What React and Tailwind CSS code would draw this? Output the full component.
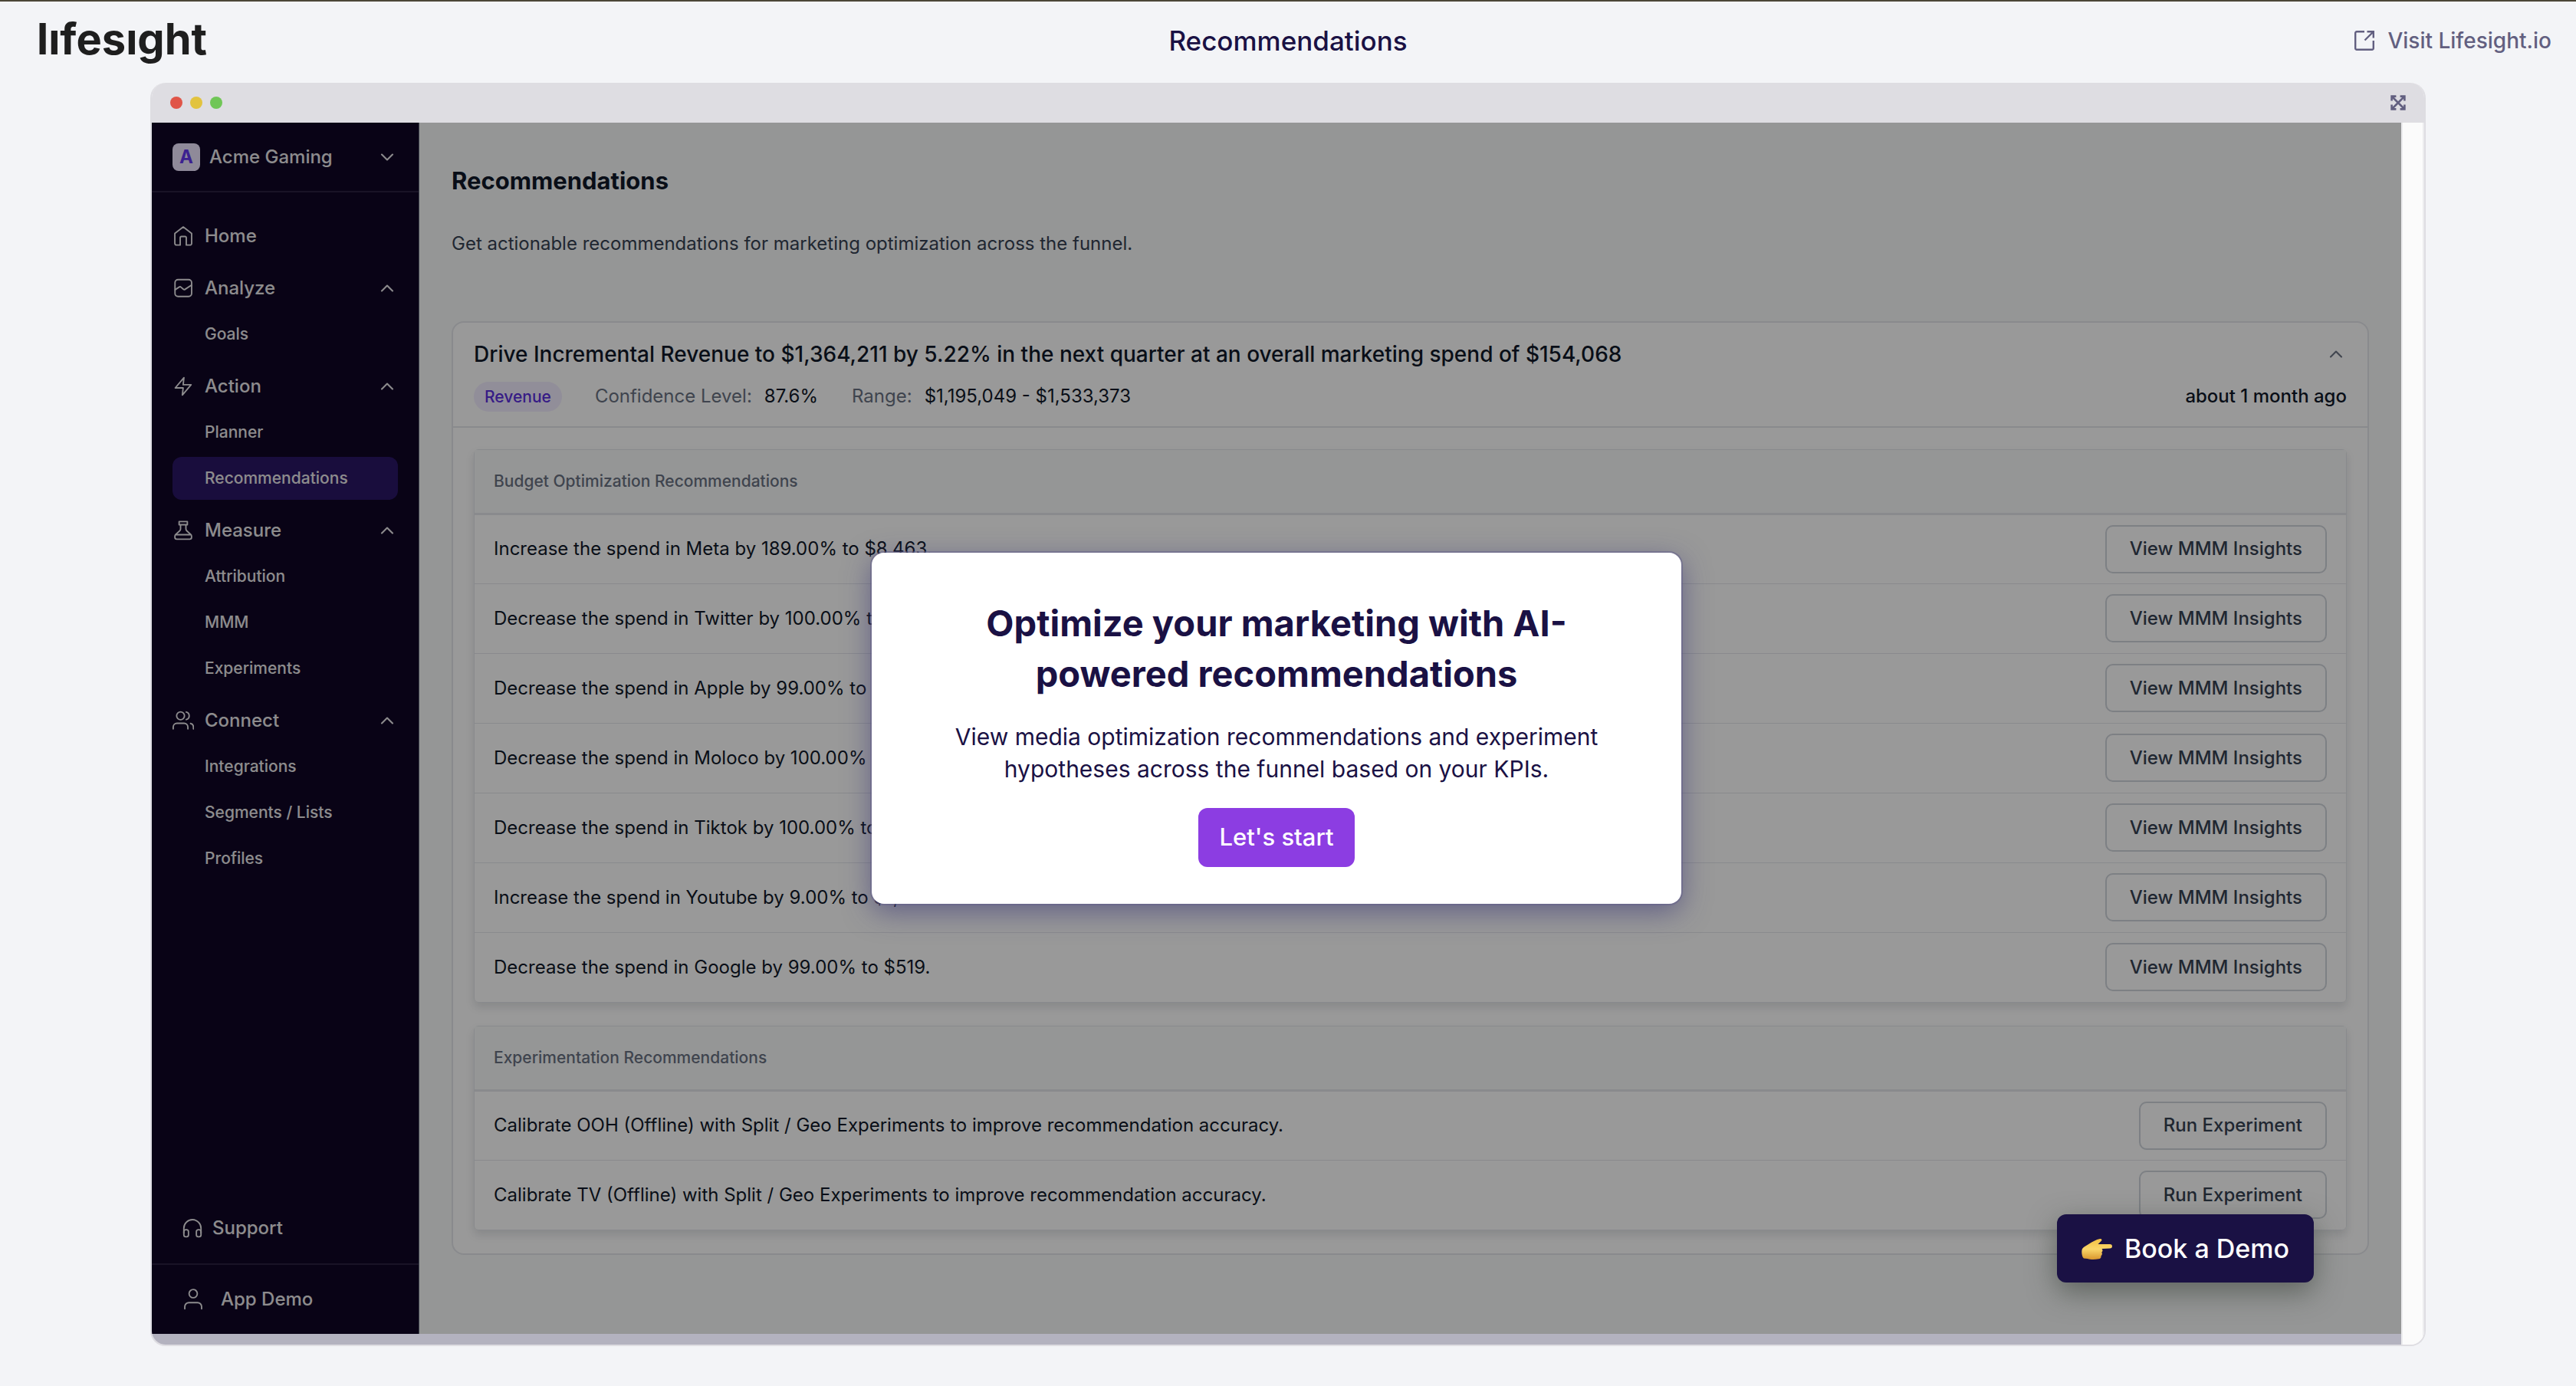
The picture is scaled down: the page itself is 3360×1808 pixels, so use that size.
import { useState } from 'react';
import { ChevronDown, ChevronUp } from 'lucide-react';

const budgetRecommendations = [
  'Increase the spend in Meta by 189.00% to $8,463.',
  'Decrease the spend in Twitter by 100.00% to $0.',
  'Decrease the spend in Apple by 99.00% to $1,204.',
  'Decrease the spend in Moloco by 100.00% to $0.',
  'Decrease the spend in Tiktok by 100.00% to $0.',
  'Increase the spend in Youtube by 9.00% to $1,927.',
  'Decrease the spend in Google by 99.00% to $519.',
];

const experimentRecommendations = [
  'Calibrate OOH (Offline) with Split / Geo Experiments to improve recommendation accuracy.',
  'Calibrate TV (Offline) with Split / Geo Experiments to improve recommendation accuracy.',
];

const Icon = ({ children }) => (
  <svg
    viewBox="0 0 24 24"
    fill="none"
    stroke="currentColor"
    strokeWidth="1.6"
    strokeLinecap="round"
    strokeLinejoin="round"
    aria-hidden="true"
    className="size-7 shrink-0"
  >
    {children}
  </svg>
);

const HomeIcon = () => (
  <Icon>
    <path d="M12 1.8 2.6 9v11.2a1.8 1.8 0 0 0 1.8 1.8H8.6v-8.2a1.4 1.4 0 0 1 1.4-1.4h4a1.4 1.4 0 0 1 1.4 1.4V22h4.2a1.8 1.8 0 0 0 1.8-1.8V9Z" />
  </Icon>
);

const AnalyzeIcon = () => (
  <Icon>
    <rect x="2.8" y="2.4" width="18.6" height="18.8" rx="3.4" />
    <path d="m3 13.6 4.6-3a1.6 1.6 0 0 1 1.9.2l2.6 2.3a1.6 1.6 0 0 0 2 .1l7-4.6" />
  </Icon>
);

const ActionIcon = () => (
  <Icon>
    <path d="M12.8 2.2 3.1 13.7h8.8l-.9 8.1 9.8-11.6h-8.9Z" />
  </Icon>
);

const MeasureIcon = () => (
  <Icon>
    <path d="M7.4 2h9.2v3.6H7.4ZM9 5.8v4.4a3 3 0 0 1-1 2.2l-4.4 4a3 3 0 0 0-.9 2v1.4c0 1.2.9 2 2 2h14.6c1.1 0 2-.8 2-2v-1.4a3 3 0 0 0-.9-2l-4.4-4a3 3 0 0 1-1-2.2V5.8M3.4 16.7h17.2" />
  </Icon>
);

const ConnectIcon = () => (
  <Icon>
    <circle cx="9" cy="6.6" r="4.4" />
    <path d="M.8 21.2v-2a4.2 4.2 0 0 1 4.2-4.2h8a4.2 4.2 0 0 1 4.2 4.2v2M15.4 2.4a4.4 4.4 0 0 1 0 8.5M23.4 21.2v-2a4.2 4.2 0 0 0-3.2-4" />
  </Icon>
);

const SupportIcon = () => (
  <Icon>
    <path d="M2.4 17.6v-5.4a9.6 9.6 0 0 1 19.2 0v5.4" />
    <rect x="2.4" y="13.8" width="5.2" height="8" rx="2.2" />
    <rect x="16.4" y="13.8" width="5.2" height="8" rx="2.2" />
  </Icon>
);

const UserIcon = () => (
  <Icon>
    <circle cx="12" cy="5.6" r="4.6" />
    <path d="M2.6 22.6v-2.4a4.6 4.6 0 0 1 4.6-4.6h9.6a4.6 4.6 0 0 1 4.6 4.6v2.4" />
  </Icon>
);

const ExternalIcon = () => (
  <svg viewBox="0 0 28 28" fill="none" stroke="currentColor" strokeWidth="2.4" aria-hidden="true" className="size-7 shrink-0">
    <path d="M14 2.2H4A1.8 1.8 0 0 0 2.2 4v20A1.8 1.8 0 0 0 4 25.8h20a1.8 1.8 0 0 0 1.8-1.8V14" />
    <path d="M17.5 2.2h8.3v8.3M25.5 2.5l-11 11" />
  </svg>
);

const ExpandIcon = () => (
  <svg viewBox="0 0 20 20" fill="none" stroke="currentColor" strokeWidth="2.6" aria-hidden="true" className="size-5">
    <path d="M1.6 7.4V1.6h5.8M12.6 1.6h5.8v5.8M18.4 12.6v5.8h-5.8M7.4 18.4H1.6v-5.8" />
    <path d="m2 2 16 16M18 2 2 18" />
  </svg>
);

const PointingHand = () => (
  <svg viewBox="0 0 40 32" aria-hidden="true" className="h-8 w-10 shrink-0">
    <defs>
      <linearGradient id="hand" x1="0" y1="0" x2="0" y2="1">
        <stop offset="0" stopColor="#f3c043" />
        <stop offset="0.5" stopColor="#fad669" />
        <stop offset="1" stopColor="#d9962e" />
      </linearGradient>
    </defs>
    <path
      fill="url(#hand)"
      d="M1 16c2-3 6-4.5 9-6.5C14 7 19 4 24 3c2.5-.4 3.2 1.600 1.600 3L21.500 10H37c4 0 4 5.500 0 5.600l-10.500.4c1.500 1.400 1.200 3.600-.3 4.600 1.200 1.500.8 3.700-.8 4.600.6 2-.6 3.800-2.900 4.100-5 .8-10.500 1-14.500-.3L3 28.500c-2.500-2-3.500-9-2-12.500Z"
    />
  </svg>
);

const navigation = [
  { name: 'Home', icon: HomeIcon },
  { name: 'Analyze', icon: AnalyzeIcon, children: ['Goals'] },
  { name: 'Action', icon: ActionIcon, children: ['Planner', 'Recommendations'] },
  { name: 'Measure', icon: MeasureIcon, children: ['Attribution', 'MMM', 'Experiments'] },
  { name: 'Connect', icon: ConnectIcon, children: ['Integrations', 'Segments / Lists', 'Profiles'] },
];

const NavGroup = ({ item }) => {
  const [open, setOpen] = useState(true);
  const ItemIcon = item.icon;

  if (!item.children) {
    return (
      <a href="#" className="flex h-14 items-center gap-3.5">
        <ItemIcon />
        {item.name}
      </a>
    );
  }

  return (
    <div className="flex flex-col gap-1">
      <button type="button" aria-expanded={open} onClick={() => setOpen(!open)} className="flex h-14 items-center gap-3.5">
        <ItemIcon />
        {item.name}
        <ChevronUp className="ml-auto size-7" strokeWidth={1.8} />
      </button>
      {open &&
        item.children.map((child) => (
          <a
            key={child}
            href="#"
            className={`flex h-14 items-center rounded-xl pl-[42px] text-[21px] ${child === 'Recommendations' ? 'bg-[#2b1667]' : ''}`}
          >
            {child}
          </a>
        ))}
    </div>
  );
};

const Sidebar = () => (
  <aside className="flex w-[349px] shrink-0 flex-col border-r border-gray-500 bg-[#0f0526] text-[24px] font-medium text-[#ebe9ec]">
    <button type="button" className="flex h-[91px] items-center border-b-2 border-[#2b2140] px-[27px]">
      <span className="mr-3 flex size-9 items-center justify-center rounded-lg bg-[#eee6ff] font-bold text-[#6538f0]">A</span>
      Acme Gaming
      <ChevronDown className="ml-auto size-7" strokeWidth={1.8} />
    </button>
    <nav className="flex flex-col gap-3 px-[27px] pt-[29px]">
      {navigation.map((item) => (
        <NavGroup key={item.name} item={item} />
      ))}
    </nav>
    <a href="#" className="mt-auto flex items-center gap-3 border-b-2 border-[#2b2140] pb-7 pl-[39px] leading-9">
      <SupportIcon />
      Support
    </a>
    <a href="#" className="flex h-[90px] items-center gap-[22px] pl-10">
      <UserIcon />
      App Demo
    </a>
  </aside>
);

const RecommendationTable = ({ title, rows, action }) => (
  <div className="rounded-md border border-gray-200 shadow-[0_6px_12px_rgba(17,24,39,0.12)]">
    <table className="w-full text-left text-[24px] text-gray-900">
      <thead>
        <tr className="h-[83px] border-b-3 border-gray-200 bg-gray-50">
          <th colSpan={2} className="pl-[25px] text-[21px] font-medium text-gray-500">
            {title}
          </th>
        </tr>
      </thead>
      <tbody>
        {rows.map((row) => (
          <tr key={row} className="h-[91px] border-b border-gray-200 last:border-b-0">
            <td className="pl-[25px]">{row}</td>
            <td className="pr-[25px] text-right">
              <button
                type="button"
                className="h-[63px] rounded-[10px] border-2 border-gray-300 bg-white px-[30px] font-medium text-gray-700"
              >
                {action}
              </button>
            </td>
          </tr>
        ))}
      </tbody>
    </table>
  </div>
);

const RecommendationCard = () => (
  <section className="mt-[85px] rounded-2xl border-2 border-gray-200 bg-white">
    <header className="border-b-2 border-gray-200 px-[27px] pt-[21px] pb-[19px]">
      <div className="flex h-10 items-center justify-between">
        <h2 className="text-[28px] font-medium text-gray-900">
          Drive Incremental Revenue to $1,364,211 by 5.22% in the next quarter at an overall marketing spend of $154,068
        </h2>
        <button type="button" aria-label="Collapse" className="text-gray-500">
          <ChevronUp className="size-7" strokeWidth={1.8} />
        </button>
      </div>
      <div className="mt-[15px] flex h-10 items-center text-[24px] text-gray-900">
        <span className="mr-[43px] rounded-full bg-[#f2edff] px-3.5 text-[21px] leading-[39px] font-medium text-[#5b2fe0]">
          Revenue
        </span>
        <span className="mr-4 text-gray-500">Confidence Level:</span>
        <span className="mr-11">87.6%</span>
        <span className="mr-4 text-gray-500">Range:</span>
        <span>$1,195,049 - $1,533,373</span>
        <span className="ml-auto font-medium">about 1 month ago</span>
      </div>
    </header>
    <div className="flex flex-col gap-[30px] px-[27px] pt-7 pb-[30px]">
      <RecommendationTable title="Budget Optimization Recommendations" rows={budgetRecommendations} action="View MMM Insights" />
      <RecommendationTable title="Experimentation Recommendations" rows={experimentRecommendations} action="Run Experiment" />
    </div>
  </section>
);

const WelcomeDialog = () => (
  <div className="absolute inset-0 flex items-center justify-center bg-black/40">
    <div
      role="dialog"
      aria-labelledby="welcome-title"
      className="flex w-[1056px] flex-col items-center rounded-2xl bg-white px-20 pt-[59px] pb-12 text-center text-[#1a1144] shadow-[0_0_0_2px_rgba(100,95,140,0.5),0_10px_36px_rgba(60,56,120,0.6)]"
    >
      <h2 id="welcome-title" className="text-[47px] leading-[66px] font-bold">
        Optimize your marketing with AI-
        <br />
        powered recommendations
      </h2>
      <p className="mt-7 text-[30px] leading-[42px]">
        View media optimization recommendations and experiment hypotheses across the funnel based on your KPIs.
      </p>
      <button type="button" className="mt-[30px] h-[77px] rounded-xl bg-[#8c3de2] px-7 text-[31px] font-medium text-white">
        Let's start
      </button>
    </div>
  </div>
);

const App = () => {
  return (
    <div className="flex min-h-screen flex-col border-t-2 border-[#4b4637] bg-[#f3f4f7] pb-[52px] font-['Inter',sans-serif]">
      <header className="grid h-[106px] grid-cols-3 items-center px-8 pb-1">
        <a href="#" aria-label="Lifesight" className="justify-self-start pb-1 pl-4 text-[56px] leading-none font-bold text-[#1e1e1e]">
          lıfesıght
        </a>
        <h1 className="justify-self-center text-[35px] font-medium text-[#1a1144]">Recommendations</h1>
        <a href="#" className="flex items-center gap-4 justify-self-end text-[28px] font-medium text-[#625f80]">
          <ExternalIcon />
          Visit Lifesight.io
        </a>
      </header>

      <div className="mx-49 flex flex-1 flex-col overflow-hidden rounded-[20px] border-2 border-t-0 border-[#dedde2] bg-[#fbfbfb]">
        <div className="flex h-[52px] items-center gap-2.5 bg-[#dedde2] px-6">
          <span className="size-4 rounded-full bg-[#e05548]" />
          <span className="size-4 rounded-full bg-[#e2c33f]" />
          <span className="size-4 rounded-full bg-[#70c657]" />
          <button type="button" aria-label="Full screen" className="ml-auto text-[#625f80]">
            <ExpandIcon />
          </button>
        </div>

        <div className="flex flex-1">
          <div className="flex flex-1 flex-col border-b-14 border-[#b3b2bf]">
            <div className="relative flex flex-1">
              <Sidebar />
              <main className="flex-1 bg-gray-50 px-[42px] pt-14 pb-20">
                <h2 className="text-[31px] leading-10 font-bold text-gray-900">Recommendations</h2>
                <p className="mt-[46px] text-[24px] leading-8 text-gray-700">
                  Get actionable recommendations for marketing optimization across the funnel.
                </p>
                <RecommendationCard />
              </main>
              <WelcomeDialog />
              <a
                href="#"
                className="absolute right-[114px] bottom-[67px] flex h-[89px] items-center gap-4 rounded-xl bg-[#1a1144] px-8 text-[34px] font-medium text-white shadow-[0_12px_36px_rgba(40,50,40,0.5)]"
              >
                <PointingHand />
                Book a Demo
              </a>
            </div>
          </div>
          <div className="w-[30px] border-x-2 border-[#ececee] bg-[#fbfbfb]" />
        </div>
      </div>
    </div>
  );
};

export default App;
